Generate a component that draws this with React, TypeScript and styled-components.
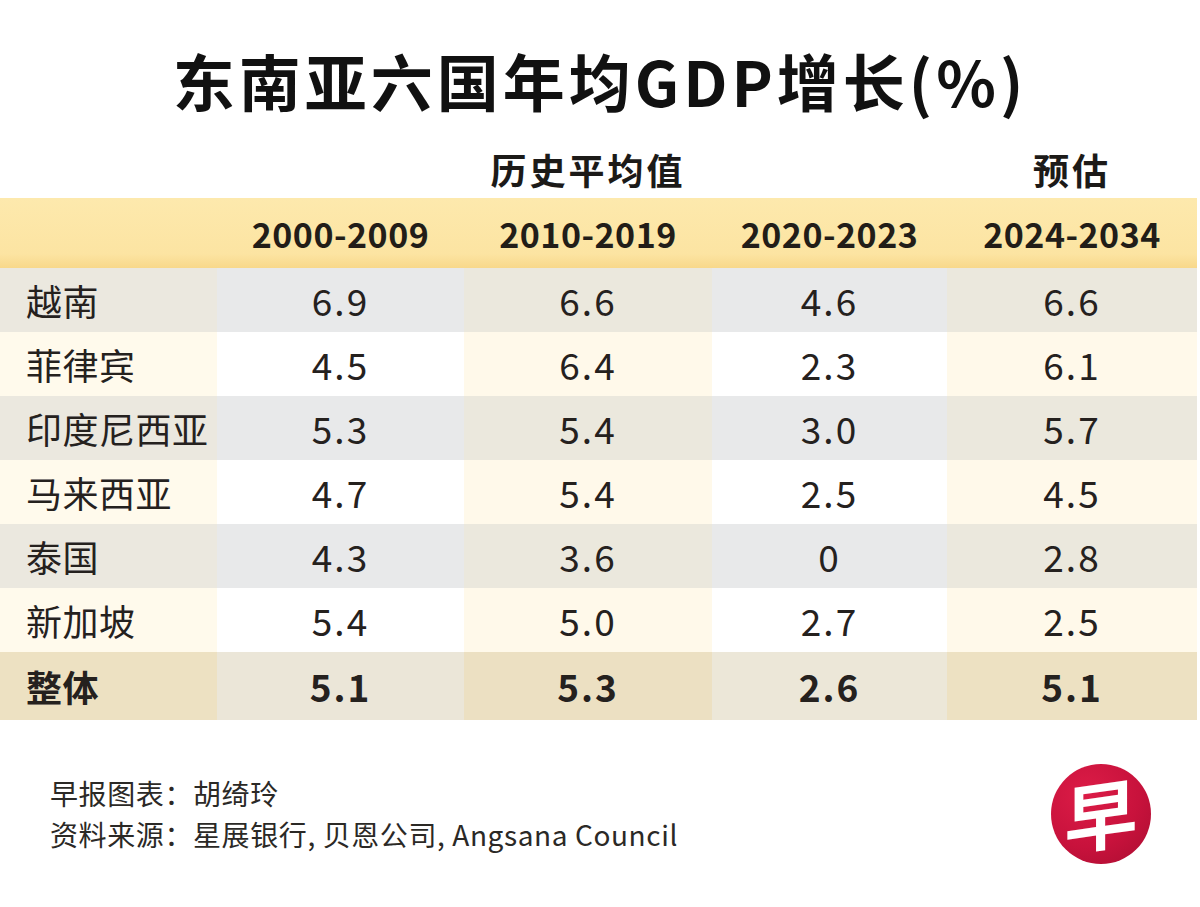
import styled, { createGlobalStyle } from 'styled-components';

const GlobalStyle = createGlobalStyle`
  html, body {
    margin: 0;
    padding: 0;
    background: #ffffff;
  }
  body {
    font-family: "Noto Sans CJK SC", "Noto Sans", sans-serif;
    color: #1c1a18;
  }
`;

const Page = styled.div`
  width: 1200px;
  height: 907px;
  background: #ffffff;
  overflow: hidden;
`;

const Title = styled.h1`
  margin: 25px 0 0;
  height: 110px;
  display: flex;
  align-items: center;
  justify-content: center;
  font-size: 62px;
  font-weight: 700;
  color: #111;
  letter-spacing: 4px;
`;

const Table = styled.div`
  width: 1197px;
  margin-top: 5px;
  display: grid;
  grid-template-columns: 217px 247px 248px 235px 250px;
`;

const GroupCell = styled.div<{ $col: number }>`
  grid-column: ${(p) => p.$col};
  height: 58px;
  display: flex;
  align-items: center;
  justify-content: center;
  font-size: 36px;
  font-weight: 700;
  letter-spacing: 3px;
  color: #1c1a18;
`;

const HeadRow = styled.div`
  grid-column: 1 / -1;
  display: grid;
  grid-template-columns: subgrid;
  height: 70px;
  background: linear-gradient(180deg, #fde9ad 0%, #fce4a2 80%, #f8d88a 100%);
`;

const HeadCell = styled.div`
  display: flex;
  align-items: center;
  justify-content: center;
  font-size: 34px;
  font-weight: 700;
  letter-spacing: 0.5px;
  color: #221d18;
`;

const shades = {
  odd: ['#ebe8df', '#e8e9ea', '#ebe8dd', '#e8e9ea', '#ebe8dd'],
  even: ['#fffaec', '#ffffff', '#fff9ea', '#ffffff', '#fff9ea'],
  total: ['#ede1c2', '#ebe6d8', '#ece0c2', '#ece7d8', '#ede1c2'],
};

const Row = styled.div<{ $total?: boolean }>`
  grid-column: 1 / -1;
  display: grid;
  grid-template-columns: subgrid;
  height: ${(p) => (p.$total ? 68 : 64)}px;
`;

const Cell = styled.div<{ $bg: string; $label?: boolean; $bold?: boolean }>`
  background: ${(p) => p.$bg};
  display: flex;
  align-items: center;
  justify-content: ${(p) => (p.$label ? 'flex-start' : 'center')};
  padding-left: ${(p) => (p.$label ? '26px' : '0')};
  font-size: ${(p) => (p.$label ? 36 : 37)}px;
  font-weight: ${(p) => (p.$bold ? 700 : 400)};
  letter-spacing: ${(p) => (p.$label ? '0.5px' : '2px')};
  color: #25211e;
`;

const Footer = styled.div`
  display: flex;
  align-items: center;
  justify-content: space-between;
  padding: 44px 49px 0 50px;
`;

const Credits = styled.div`
  font-size: 28px;
  line-height: 41px;
  letter-spacing: 0.6px;
  color: #2b2926;
`;

const Logo = styled.div`
  width: 100px;
  height: 100px;
  border-radius: 50%;
  background: radial-gradient(circle at 35% 30%, #dc1c47 0%, #c8123c 55%, #a90d31 100%);
  display: flex;
  align-items: center;
  justify-content: center;
  color: #ffffff;
  font-size: 74px;
  font-weight: 700;
  line-height: 1;
  font-family: "Noto Sans CJK SC", sans-serif;
`;

const LogoChar = styled.span`
  display: inline-block;
  transform: rotate(-8deg) skewX(-8deg);
  margin-top: -4px;
`;

const periods = ['2000-2009', '2010-2019', '2020-2023', '2024-2034'];

const rows: { name: string; values: string[] }[] = [
  { name: '越南', values: ['6.9', '6.6', '4.6', '6.6'] },
  { name: '菲律宾', values: ['4.5', '6.4', '2.3', '6.1'] },
  { name: '印度尼西亚', values: ['5.3', '5.4', '3.0', '5.7'] },
  { name: '马来西亚', values: ['4.7', '5.4', '2.5', '4.5'] },
  { name: '泰国', values: ['4.3', '3.6', '0', '2.8'] },
  { name: '新加坡', values: ['5.4', '5.0', '2.7', '2.5'] },
];

const total = { name: '整体', values: ['5.1', '5.3', '2.6', '5.1'] };

export default function App() {
  return (
    <Page>
      <GlobalStyle />
      <Title>东南亚六国年均GDP增长(%)</Title>
      <Table>
        <GroupCell $col={3}>历史平均值</GroupCell>
        <GroupCell $col={5}>预估</GroupCell>
        <HeadRow>
          <HeadCell />
          {periods.map((p) => (
            <HeadCell key={p}>{p}</HeadCell>
          ))}
        </HeadRow>
        {rows.map((r, i) => {
          const bg = i % 2 === 0 ? shades.odd : shades.even;
          return (
            <Row key={r.name}>
              <Cell $bg={bg[0]} $label>
                {r.name}
              </Cell>
              {r.values.map((v, j) => (
                <Cell key={j} $bg={bg[j + 1]}>
                  {v}
                </Cell>
              ))}
            </Row>
          );
        })}
        <Row $total>
          <Cell $bg={shades.total[0]} $label $bold>
            {total.name}
          </Cell>
          {total.values.map((v, j) => (
            <Cell key={j} $bg={shades.total[j + 1]} $bold>
              {v}
            </Cell>
          ))}
        </Row>
      </Table>
      <Footer>
        <Credits>
          <div>早报图表：胡绮玲</div>
          <div>资料来源：星展银行, 贝恩公司, Angsana Council</div>
        </Credits>
        <Logo>
          <LogoChar>早</LogoChar>
        </Logo>
      </Footer>
    </Page>
  );
}
